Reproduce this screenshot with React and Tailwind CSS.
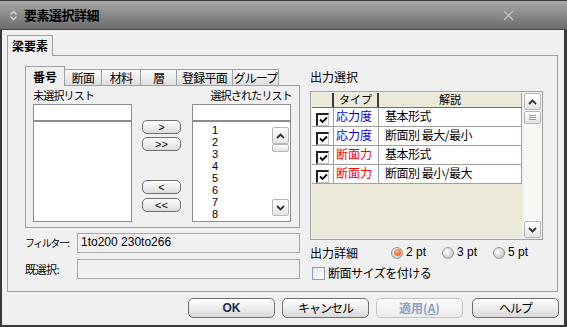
import React from 'react'

const INNER_TABS = [
  { label: '番号', w: 'w-[40px]', active: true },
  { label: '断面', w: 'w-[37px]' },
  { label: '材料', w: 'w-[39px]' },
  { label: '層', w: 'w-[36px]' },
  { label: '登録平面', w: 'w-[56px]' },
  { label: 'グループ', w: 'w-[46px]' },
]

const ROWS = [
  { type: '応力度', color: 'text-[#0000ff]', desc: '基本形式' },
  { type: '応力度', color: 'text-[#0000ff]', desc: '断面別 最大/最小' },
  { type: '断面力', color: 'text-[#ff0000]', desc: '基本形式' },
  { type: '断面力', color: 'text-[#ff0000]', desc: '断面別 最小/最大' },
]

export default function App() {
  return (
    <div className="w-[567px] h-[327px] flex flex-col overflow-hidden font-['Noto_Sans_CJK_JP','Liberation_Sans',sans-serif] text-[12px] text-black">
      {/* Title bar */}
      <div className="h-[30px] shrink-0 flex items-center bg-gradient-to-b from-[#a9a9a9] to-[#6b6b6b] border-t border-t-[#3a3a3a] border-b border-b-[#4a4a4a]">
        <svg className="ml-[9px]" width="9" height="11" viewBox="0 0 9 11">
          <path d="M1.5 4.5 L4.5 1.5 L7.5 4.5 M1.5 6.5 L4.5 9.5 L7.5 6.5" fill="none" stroke="#d8d8d8" strokeWidth="1.3" />
        </svg>
        <span className="ml-[6px] text-[13px] leading-[16px] font-bold text-[#000] tracking-[-0.5px]">要素選択詳細</span>
        <svg className="ml-auto mr-[53px]" width="11" height="11" viewBox="0 0 11 11">
          <path d="M1 1 L10 10 M10 1 L1 10" stroke="#c4c4c4" strokeWidth="1.3" />
        </svg>
      </div>

      {/* Body */}
      <div className="flex-1 flex flex-col bg-[#f0f0f0] border-l-2 border-r-[3px] border-b-2 border-[#383838] pl-[5px] pr-[6px] pt-[5px]">
        <div className="relative z-10 -mb-px w-[46px] h-[21px] border border-b-0 border-[#a0a0a0] bg-[#f0f0f0] flex items-center justify-center font-bold leading-[14px]">
          梁要素
        </div>
        <div className="h-[237px] border border-[#a0a0a0] pl-[17px] pt-[12px] flex gap-[10px]">
          {/* Left column */}
          <div className="w-[275px] flex flex-col">
            <div className="relative z-10 -mb-px h-[18px] flex items-end whitespace-nowrap">
              {INNER_TABS.map(t =>
                t.active ? (
                  <div key={t.label} className={`${t.w} h-[20px] border border-b-0 border-[#a0a0a0] bg-[#f0f0f0] flex items-center justify-center font-bold leading-[14px]`}>
                    {t.label}
                  </div>
                ) : (
                  <div key={t.label} className={`${t.w} h-[16px] mb-px border-t border-r border-[#a0a0a0] bg-gradient-to-b from-[#fbfbfb] to-[#dedede] flex items-center justify-center leading-[14px] tracking-[-0.8px]`}>
                    {t.label}
                  </div>
                )
              )}
            </div>
            <div className="h-[143px] border border-[#a0a0a0] px-[7px] pt-[2px]">
              <div className="h-[15px] mb-px flex justify-between leading-[15px] text-[11px] tracking-[-0.8px] whitespace-nowrap">
                <span>未選択リスト</span>
                <span>選択されたリスト</span>
              </div>
              <div className="flex">
                <div className="w-[99px] flex flex-col">
                  <div className="h-[17px] border border-[#8c8c8c] bg-white" />
                  <div className="h-[101px] border border-[#8c8c8c] bg-white" />
                </div>
                <div className="ml-[10px] w-[39px] flex flex-col pt-[16px]">
                  <MoveButton label=">" />
                  <MoveButton label=">>" className="mt-[3px]" />
                  <MoveButton label="<" className="mt-[29px]" />
                  <MoveButton label="<<" className="mt-[4px]" />
                </div>
                <div className="ml-[11px] w-[99px] flex flex-col">
                  <div className="h-[17px] border border-[#8c8c8c] bg-white" />
                  <div className="h-[101px] border border-[#8c8c8c] bg-white flex">
                    <div className="flex-1 pl-[19px] pt-[2px] font-['Liberation_Sans',sans-serif] text-[11px] leading-[12px]">
                      {[1, 2, 3, 4, 5, 6, 7, 8].map(n => <div key={n} className="h-[12px]">{n}</div>)}
                    </div>
                    <div className="w-[17px] mr-px my-[5px] flex flex-col">
                      <ScrollBtn dir="up" />
                      <div className="h-[8px] border border-[#b8b8b8] rounded-[2px] bg-gradient-to-b from-white to-[#e2e2e2]" />
                      <div className="flex-1" />
                      <ScrollBtn dir="down" />
                    </div>
                  </div>
                </div>
              </div>
            </div>
            <div className="mt-[5px] h-[20px] flex items-center">
              <span className="w-[52px] text-[10px] tracking-[-1.5px] leading-[14px] whitespace-nowrap">フィルター:</span>
              <div className="flex-1 h-[20px] border border-[#a8a8a8] bg-[#f0f0f0] px-[3px] font-['Liberation_Sans',sans-serif] text-[12px] leading-[16px]">
                1to200 230to266
              </div>
            </div>
            <div className="mt-[6px] h-[20px] flex items-center">
              <span className="w-[52px] text-[11px] tracking-[-0.5px] leading-[14px] whitespace-nowrap">既選択:</span>
              <div className="flex-1 h-[20px] border border-[#a8a8a8] bg-[#f0f0f0]" />
            </div>
          </div>

          {/* Right column */}
          <div className="w-[233px] flex flex-col">
            <div className="mt-px h-[15px] leading-[15px]">出力選択</div>
            <div className="mt-[7px] h-[149px] border border-[#a0a0a0] p-px flex">
              <div className="w-[210px] flex flex-col bg-[#ece9d8]">
                <div className="h-[15px] flex border-b border-[#6e6e6e] text-[11px] leading-[13px]">
                  <div className="w-[22px] border-r-2 border-[#3c3c3c]" />
                  <div className="w-[45px] border-r-2 border-[#3c3c3c] text-center">タイプ</div>
                  <div className="w-[143px] border-r border-[#a0a0a0] text-center">解説</div>
                </div>
                {ROWS.map((r, i) => (
                  <div key={i} className="h-[19px] flex bg-white border-b border-[#a0a0a0] text-[12px] leading-[16px] whitespace-nowrap">
                    <div className="w-[22px] border-r border-[#a0a0a0] pl-[4px] pt-[5px]">
                      <GridCheck />
                    </div>
                    <div className={`w-[45px] border-r border-[#a0a0a0] pl-[2px] ${r.color}`}>{r.type}</div>
                    <div className="w-[143px] border-r border-[#a0a0a0] pl-[6px] tracking-[-0.5px]">{r.desc}</div>
                  </div>
                ))}
              </div>
              <div className="ml-[2px] w-[17px] flex flex-col bg-[#f7f7f4]">
                <ScrollBtn dir="up" />
                <div className="mt-px h-[13px] border border-[#b8b8b8] rounded-[2px] bg-gradient-to-b from-white to-[#e2e2e2] flex flex-col items-center justify-center gap-[1px]">
                  <div className="w-[7px] h-px bg-[#9a9a9a]" />
                  <div className="w-[7px] h-px bg-[#9a9a9a]" />
                  <div className="w-[7px] h-px bg-[#9a9a9a]" />
                </div>
                <div className="flex-1" />
                <ScrollBtn dir="down" />
              </div>
            </div>
            <div className="mt-[5px] h-[15px] flex items-center leading-[15px]">
              <span className="w-[81px]">出力詳細</span>
              <Radio label="2 pt" checked className="w-[51px]" />
              <Radio label="3 pt" className="w-[51px]" />
              <Radio label="5 pt" />
            </div>
            <div className="mt-[6px] h-[14px] flex items-center leading-[14px]">
              <span className="ml-[2px] w-[13px] h-[13px] border border-[#8fa0b8] bg-gradient-to-br from-[#e4e8ee] to-white" />
              <span className="ml-[3px] tracking-[-0.5px]">断面サイズを付ける</span>
            </div>
          </div>
        </div>

        {/* Footer buttons */}
        <div className="mt-[6px] -mr-px flex justify-end gap-[7px]">
          <DlgButton className="font-bold font-['Liberation_Sans',sans-serif] text-[#1b2a48]">OK</DlgButton>
          <DlgButton className="tracking-[-1px]">キャンセル</DlgButton>
          <DlgButton disabled className="font-bold text-[#8c9fc4]">
            適用(<span className="underline">A</span>)
          </DlgButton>
          <DlgButton className="ml-[2px] tracking-[-1px]">ヘルプ</DlgButton>
        </div>
      </div>
    </div>
  )
}

function MoveButton({ label, className = '' }) {
  return (
    <div className={`h-[14px] rounded-[5px] border border-[#6f6f6f] bg-gradient-to-b from-white to-[#dcdcdc] flex items-center justify-center font-['Liberation_Sans',sans-serif] text-[11px] leading-[11px] ${className}`}>
      {label}
    </div>
  )
}

function ScrollBtn({ dir }) {
  return (
    <div className="h-[17px] border border-[#b8b8b8] rounded-[2px] bg-gradient-to-b from-white to-[#e4e4e4] flex items-center justify-center">
      <svg width="9" height="6" viewBox="0 0 9 6">
        <path d={dir === 'up' ? 'M1 5 L4.5 1.5 L8 5' : 'M1 1 L4.5 4.5 L8 1'} fill="none" stroke="#333" strokeWidth="1.8" />
      </svg>
    </div>
  )
}

function GridCheck() {
  return (
    <div className="w-[13px] h-[13px] border-l-2 border-t-2 border-[#222] border-r border-b border-r-[#c0c0c0] border-b-[#c0c0c0] bg-white flex items-center justify-center">
      <svg width="9" height="8" viewBox="0 0 9 8">
        <path d="M1 3.5 L3.5 6 L8 1.5" fill="none" stroke="#000" strokeWidth="1.8" />
      </svg>
    </div>
  )
}

function Radio({ label, checked, className = '' }) {
  return (
    <div className={`flex items-center ${className}`}>
      <span className="w-[12px] h-[12px] rounded-full border border-[#9a9a9a] bg-[radial-gradient(circle_at_35%_35%,#ffffff,#b4b4b4)] flex items-center justify-center">
        {checked && <span className="w-[7px] h-[7px] rounded-full bg-[radial-gradient(circle_at_40%_35%,#ffb27a,#e2480f)]" />}
      </span>
      <span className="ml-[3px] font-['Liberation_Sans',sans-serif] text-[12px]">{label}</span>
    </div>
  )
}

function DlgButton({ children, disabled, className = '' }) {
  return (
    <div
      className={`w-[87px] h-[20px] rounded-[5px] border flex items-center justify-center text-[12px] leading-[14px] ${
        disabled
          ? 'border-[#c4c4c4] bg-gradient-to-b from-[#fafafa] to-[#ececec]'
          : 'border-[#707070] bg-gradient-to-b from-white to-[#dadada]'
      } ${className}`}
    >
      {children}
    </div>
  )
}
